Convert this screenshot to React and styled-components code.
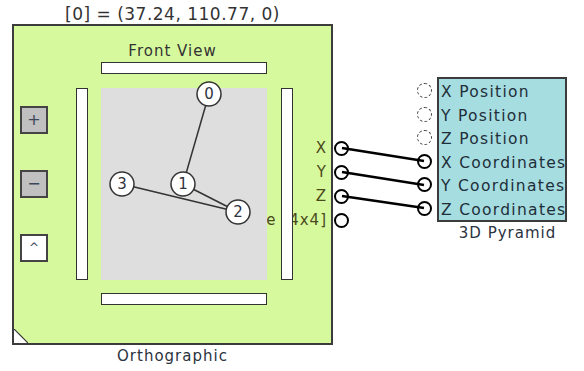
import React from "react";
import styled, { createGlobalStyle } from "styled-components";

const GlobalStyle = createGlobalStyle`
  html, body {
    margin: 0;
    padding: 0;
    background: #fff;
  }
  body {
    font-family: "DejaVu Sans", Verdana, sans-serif;
  }
`;

const Canvas = styled.div`
  position: relative;
  width: 584px;
  height: 371px;
  overflow: hidden;
  background: #fff;
`;

// a block on the free canvas
const Node = styled.div`
  position: absolute;
  left: ${(p) => p.$x}px;
  top: ${(p) => p.$y}px;
  display: flex;
  flex-direction: column;
  align-items: center;
`;

const ValueLabel = styled.div`
  font-size: 17px;
  letter-spacing: 0.5px;
  line-height: 20px;
  color: #333;
  white-space: nowrap;
`;

const Caption = styled.div`
  font-size: 15px;
  letter-spacing: 1px;
  line-height: 22px;
  color: #2b3340;
  white-space: nowrap;
  margin-left: ${(p) => p.$shift || 0}px;
`;

const OrthoBox = styled.div`
  position: relative;
  box-sizing: border-box;
  width: 321px;
  height: 321px;
  border: 2px solid #3c3c3c;
  background: #d7f99d;
  display: grid;
  grid-template-columns: 49px 12px 166px 12px 26px;
  column-gap: 13px;
  align-content: start;
  padding-top: 16px;
`;

const ViewTitle = styled.div`
  grid-column: 1 / -1;
  grid-row: 1;
  text-align: center;
  font-size: 15px;
  letter-spacing: 1px;
  line-height: 18px;
  color: #333;
  margin-bottom: 2px;
`;

const Bar = styled.div`
  position: relative;
  z-index: 1;
  box-sizing: border-box;
  grid-column: ${(p) => p.$col};
  grid-row: ${(p) => p.$row};
  height: ${(p) => (p.$vertical ? "auto" : "12px")};
  margin: ${(p) => p.$margin || 0};
  border: 1.5px solid #333;
  background: #fff;
`;

const ZoomButtons = styled.div`
  grid-column: 1;
  grid-row: 3;
  display: flex;
  flex-direction: column;
  justify-content: space-between;
  align-items: flex-start;
  padding: 18px 0 18px 6px;
`;

const ZoomButton = styled.div`
  box-sizing: border-box;
  width: 28px;
  height: 28px;
  border: 2px solid #444;
  background: ${(p) => p.$bg};
  display: flex;
  align-items: center;
  justify-content: center;
  font-size: ${(p) => p.$size || 16}px;
  line-height: 1;
  color: #3b4658;
`;

const ViewPanel = styled.div`
  position: relative;
  z-index: 1;
  grid-column: 3;
  grid-row: 3;
  height: 192px;
  background: #dedede;

  svg {
    display: block;
    overflow: visible;
  }
`;

const PortList = styled.div`
  grid-column: 5;
  grid-row: 3;
  align-self: center;
  min-width: 0;
  display: flex;
  flex-direction: column;
`;

// long labels spill left, under the bar and the view panel
const OutPort = styled.div`
  height: 24px;
  display: flex;
  align-items: center;
  justify-content: flex-end;
  gap: 7px;
  margin-right: -18px;
`;

const PortLabel = styled.span`
  flex: none;
  white-space: nowrap;
  font-size: 15px;
  letter-spacing: 1px;
  color: #4a4a1c;
`;

const InLabel = styled(PortLabel)`
  font-size: 15.5px;
  letter-spacing: 1.3px;
  padding-top: 3px;
  color: #1f2f3a;
`;

const Pin = styled.span`
  flex: none;
  box-sizing: border-box;
  width: 15px;
  height: 15px;
  border-radius: 50%;
  background: #fff;
  border: ${(p) => (p.$open ? "1px dashed #444" : "2.5px solid #000")};
`;

const CornerGrip = styled.svg`
  position: absolute;
  left: 0;
  bottom: 0;
  display: block;
`;

const PyramidBox = styled.div`
  box-sizing: border-box;
  width: 130px;
  height: 145px;
  border: 2px solid #3c3c3c;
  background: #a6dde0;
  display: flex;
  flex-direction: column;
`;

const InPort = styled.div`
  height: 23.5px;
  display: flex;
  align-items: center;

  ${Pin} {
    margin-left: -22.5px;
    margin-right: 9.5px;
  }
`;

const Wires = styled.svg`
  position: absolute;
  left: 0;
  top: 0;
  z-index: 5;
  pointer-events: none;
`;

const points = [
  { id: 0, x: 108, y: 6 },
  { id: 1, x: 82, y: 96 },
  { id: 2, x: 137, y: 124 },
  { id: 3, x: 21, y: 96 },
];
const edges = [
  [0, 1],
  [3, 2],
  [1, 2],
];

const outPorts = ["X", "Y", "Z", "Tile [4x4]"];
const inPorts = [
  { name: "X Position", open: true },
  { name: "Y Position", open: true },
  { name: "Z Position", open: true },
  { name: "X Coordinates" },
  { name: "Y Coordinates" },
  { name: "Z Coordinates" },
];

const links = [
  [342, 148, 424, 161],
  [342, 172, 424, 185],
  [342, 196, 424, 208],
];

function FrontView() {
  const byId = (id) => points.find((p) => p.id === id);
  return (
    <svg width="166" height="192">
      {edges.map(([a, b]) => (
        <line
          key={`${a}-${b}`}
          x1={byId(a).x}
          y1={byId(a).y}
          x2={byId(b).x}
          y2={byId(b).y}
          stroke="#333"
          strokeWidth="1.5"
        />
      ))}
      {points.map((p) => (
        <g key={p.id}>
          <circle cx={p.x} cy={p.y} r="12" fill="#fff" stroke="#333" strokeWidth="1.5" />
          <text
            x={p.x}
            y={p.y + 5}
            textAnchor="middle"
            fontSize="15"
            fontFamily="DejaVu Sans, sans-serif"
            fill="#2f3440"
          >
            {p.id}
          </text>
        </g>
      ))}
    </svg>
  );
}

export default function App() {
  return (
    <Canvas>
      <GlobalStyle />

      <Node $x={12} $y={4}>
        <ValueLabel>[0] = (37.24, 110.77, 0)</ValueLabel>
        <OrthoBox>
          <ViewTitle>Front View</ViewTitle>
          <Bar $col={3} $row={2} $margin="0 0 14px 0" />
          <ZoomButtons>
            <ZoomButton $bg="#c0c0c0">+</ZoomButton>
            <ZoomButton $bg="#c0c0c0">−</ZoomButton>
            <ZoomButton $bg="#fff" $size={12}>
              ^
            </ZoomButton>
          </ZoomButtons>
          <Bar $col={2} $row={3} $vertical />
          <ViewPanel>
            <FrontView />
          </ViewPanel>
          <Bar $col={4} $row={3} $vertical $margin="0 -1px 0 1px" />
          <PortList>
            {outPorts.map((name) => (
              <OutPort key={name}>
                <PortLabel>{name}</PortLabel>
                <Pin />
              </OutPort>
            ))}
          </PortList>
          <Bar $col={3} $row={4} $margin="13px 0 0 0" />
          <CornerGrip width="14" height="14" viewBox="0 0 14 14">
            <polygon points="0,0 14,14 0,14" fill="#fff" />
            <line x1="0" y1="0" x2="14" y2="14" stroke="#333" strokeWidth="1.2" />
          </CornerGrip>
        </OrthoBox>
        <Caption>Orthographic</Caption>
      </Node>

      <Node $x={437} $y={77}>
        <PyramidBox>
          {inPorts.map((port) => (
            <InPort key={port.name}>
              <Pin $open={port.open} />
              <InLabel>{port.name}</InLabel>
            </InPort>
          ))}
        </PyramidBox>
        <Caption $shift={11}>3D Pyramid</Caption>
      </Node>

      <Wires width="584" height="371">
        {links.map(([x1, y1, x2, y2], i) => (
          <line key={i} x1={x1} y1={y1} x2={x2} y2={y2} stroke="#000" strokeWidth="2.5" />
        ))}
      </Wires>
    </Canvas>
  );
}
